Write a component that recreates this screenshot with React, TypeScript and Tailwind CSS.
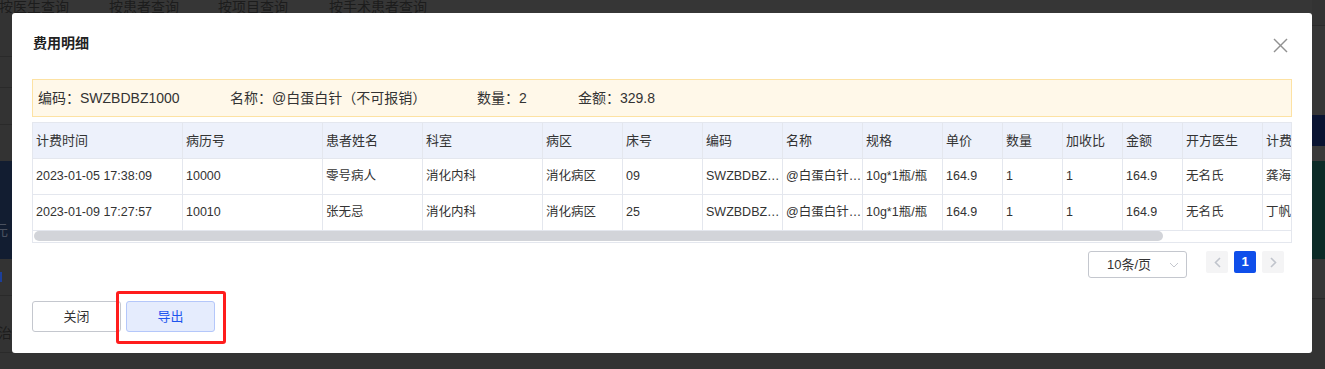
import React from "react";

const cols = [
  { t: "计费时间", w: "w-[150px]" },
  { t: "病历号", w: "w-[140px]" },
  { t: "患者姓名", w: "w-[100px]" },
  { t: "科室", w: "w-[120px]" },
  { t: "病区", w: "w-[80px]" },
  { t: "床号", w: "w-[80px]" },
  { t: "编码", w: "w-[80px]" },
  { t: "名称", w: "w-[80px]" },
  { t: "规格", w: "w-[80px]" },
  { t: "单价", w: "w-[60px]" },
  { t: "数量", w: "w-[60px]" },
  { t: "加收比", w: "w-[60px]" },
  { t: "金额", w: "w-[60px]" },
  { t: "开方医生", w: "w-[80px]" },
  { t: "计费人", w: "w-[100px]" },
];

const rows = [
  ["2023-01-05 17:38:09", "10000", "零号病人", "消化内科", "消化病区", "09", "SWZBDBZ1000", "@白蛋白针（不可报销）", "10g*1瓶/瓶", "164.9", "1", "1", "164.9", "无名氏", "龚海峰"],
  ["2023-01-09 17:27:57", "10010", "张无忌", "消化内科", "消化病区", "25", "SWZBDBZ1000", "@白蛋白针（不可报销）", "10g*1瓶/瓶", "164.9", "1", "1", "164.9", "无名氏", "丁帆远"],
];

function Background() {
  return (
    <div className="absolute inset-0 flex flex-col bg-[#333333]">
      <div className="h-[13px] shrink-0 overflow-hidden bg-[#363636] text-[14px] leading-[14px] text-[#1c1c1c] flex">
        <span className="w-[110px] -ml-[1px]">按医生查询</span>
        <span className="w-[109px]">按患者查询</span>
        <span className="w-[111px]">按项目查询</span>
        <span>按手术患者查询</span>
      </div>
      <div className="flex flex-1 justify-between">
        <div className="w-[12px] flex flex-col overflow-hidden">
          <div className="h-[44px] border-b border-[#2a2a2a]" />
          <div className="h-[31px] border-b border-[#2a2a2a]" />
          <div className="h-[37px] border-b border-[#2a2a2a]" />
          <div className="h-[36px]" />
          <div className="h-[98px] bg-[#121d31] flex items-end pb-[22px]">
            <span className="text-[14px] leading-[14px] text-[#4a5160] -ml-[6px]">元</span>
          </div>
          <div className="h-[37px] border-b border-[#2a2a2a] flex items-center">
            <span className="w-[2px] h-[10px] bg-[#1c3f9a]" />
          </div>
          <div className="h-[57px] border-b border-[#2a2a2a] flex items-end pb-[12px]">
            <span className="text-[14px] leading-[14px] text-[#1c1c1c] -ml-[2px] whitespace-nowrap">治疗</span>
          </div>
        </div>
        <div className="w-[13px] flex flex-col -mt-[13px]">
          <div className="h-[26px] bg-[#333333] border-b border-[#2b2b2b]" />
          <div className="h-[89px] bg-[#363636]" />
          <div className="h-[31px] bg-[#0a1432]" />
          <div className="h-[15px] bg-[#3a3a3a]" />
          <div className="h-[98px] bg-[#0c2b27]" />
          <div className="h-[40px] bg-[#363636] border-b border-[#2a2a2a]" />
        </div>
      </div>
    </div>
  );
}

function Chevron({ dir }: { dir: "left" | "right" }) {
  return (
    <svg width="7" height="11" viewBox="0 0 7 11" fill="none">
      <polyline
        points={dir === "left" ? "6,1 1.5,5.5 6,10" : "1,1 5.5,5.5 1,10"}
        stroke="#c0c4cc"
        strokeWidth="1.6"
      />
    </svg>
  );
}

export default function App() {
  return (
    <div className="relative w-[1325px] h-[369px] overflow-hidden font-['Liberation_Sans','Noto_Sans_CJK_SC',sans-serif] text-[#333333]">
      <Background />
      <div className="absolute left-[12px] top-[13px] w-[1300px] h-[340px] bg-white rounded-[3px] px-[20px] flex flex-col">
        <div className="h-[60px] flex items-center justify-between shrink-0">
          <span className="text-[14px] font-semibold text-[#222] pl-[1px] pt-[1px]">费用明细</span>
          <svg className="mt-[4px] mr-[4px]" width="15" height="15" viewBox="0 0 15 15" fill="none">
            <line x1="1" y1="1" x2="14" y2="14" stroke="#919191" strokeWidth="1.4" />
            <line x1="14" y1="1" x2="1" y2="14" stroke="#919191" strokeWidth="1.4" />
          </svg>
        </div>
        <div className="mt-[6px] h-[38px] bg-[#fff8e9] border border-[#fde2a3] flex items-center pl-[5px] text-[14px] text-[#333] whitespace-nowrap">
          <span className="w-[192px]">编码：SWZBDBZ1000</span>
          <span className="w-[247px]">名称：@白蛋白针（不可报销）</span>
          <span className="w-[101px]">数量：2</span>
          <span>金额：329.8</span>
        </div>
        <div className="mt-[5px] border border-[#e4e7ee] overflow-hidden text-[12.5px]">
          <div className="flex bg-[#edf1fb] border-b border-[#e4e7ee] h-[36px] text-[13px]">
            {cols.map((c, i) => (
              <div key={i} className={`${c.w} shrink-0 border-r border-[#e4e7ee] pl-[3px] flex items-center whitespace-nowrap overflow-hidden`}>
                {c.t}
              </div>
            ))}
          </div>
          {rows.map((r, ri) => (
            <div key={ri} className="flex border-b border-[#e4e7ee] h-[36px]">
              {r.map((v, i) => (
                <div key={i} className={`${cols[i].w} shrink-0 border-r border-[#e4e7ee] pl-[3px] flex items-center overflow-hidden`}>
                  <span className="truncate">{v}</span>
                </div>
              ))}
            </div>
          ))}
          <div className="h-[11px] pl-[1px]">
            <div className="w-[1129px] h-[10px] rounded-full bg-[#d2d4d9]" />
          </div>
        </div>
        <div className="mt-[8px] flex justify-end items-start pr-[8px]">
          <div className="w-[99px] h-[27px] border border-[#c4c7ce] rounded-[3px] flex items-center pl-[18px] pr-[7px] justify-between text-[13px] text-[#333]">
            <span>10条/页</span>
            <svg width="10" height="6" viewBox="0 0 10 6" fill="none">
              <polyline points="1,1 5,5 9,1" stroke="#c4c7ce" strokeWidth="1" />
            </svg>
          </div>
          <div className="ml-[19px] w-[22px] h-[22px] rounded-[2px] bg-[#f4f4f5] flex items-center justify-center">
            <Chevron dir="left" />
          </div>
          <div className="ml-[6px] w-[22px] h-[22px] rounded-[2px] bg-[#0f4eea] flex items-center justify-center text-white font-bold text-[13px]">
            1
          </div>
          <div className="ml-[6px] w-[22px] h-[22px] rounded-[2px] bg-[#f4f4f5] flex items-center justify-center">
            <Chevron dir="right" />
          </div>
        </div>
        <div className="mt-[23px] flex gap-[5px] relative">
          <button className="w-[89px] h-[31px] border border-[#c4c7ce] rounded-[3px] bg-white text-[13px] text-[#333]">
            关闭
          </button>
          <button className="w-[89px] h-[31px] border border-[#b4c7fa] rounded-[3px] bg-[#e5ecfd] text-[13px] text-[#1d55ee]">
            导出
          </button>
          <div className="absolute left-[84px] top-[-10px] w-[110px] h-[53px] border-[3px] border-[#ff1d1d] rounded-[3px]" />
        </div>
      </div>
    </div>
  );
}
